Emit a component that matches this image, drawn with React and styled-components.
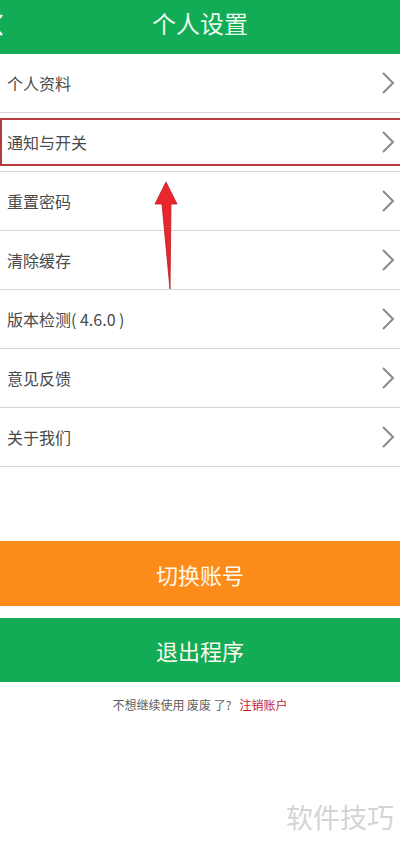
import styled, { createGlobalStyle } from "styled-components";

const GlobalStyle = createGlobalStyle`
  html, body {
    margin: 0;
    padding: 0;
    background: #ffffff;
  }
  body {
    font-family: "Noto Sans CJK SC", "Noto Sans", sans-serif;
  }
`;

const Page = styled.div`
  position: relative;
  width: 400px;
  height: 847px;
  overflow: hidden;
  background: #ffffff;
`;

const Header = styled.div`
  position: relative;
  height: 54px;
  background: #12ab56;
  display: flex;
  align-items: center;
  justify-content: center;
`;

const BackIcon = styled.svg`
  position: absolute;
  left: -10px;
  top: 13px;
`;

const Title = styled.h1`
  margin: 0;
  color: #eafbef;
  font-size: 24px;
  font-weight: 400;
  line-height: 1;
  padding-bottom: 8px;
`;

const List = styled.div`
  display: flex;
  flex-direction: column;
`;

const Row = styled.div`
  position: relative;
  height: 58px;
  display: flex;
  align-items: center;
  justify-content: space-between;
  padding: 0 4px 0 7px;
  border-bottom: 1px solid #d6d6d8;
`;

const RowLabel = styled.span`
  font-size: 16px;
  color: #4a4a4a;
`;

const Highlight = styled.div`
  position: absolute;
  left: 0;
  right: -2px;
  top: 5px;
  bottom: 5px;
  border: 2px solid #b53a40;
`;

const Arrow = styled.svg`
  position: absolute;
  left: 150px;
  top: 179px;
`;

const Buttons = styled.div`
  margin-top: 74px;
  display: flex;
  flex-direction: column;
  gap: 12px;
`;

const BigButton = styled.div`
  height: ${(p) => p.$h}px;
  background: ${(p) => p.$bg};
  color: #fff8ec;
  font-size: 22px;
  display: flex;
  align-items: center;
  justify-content: center;
`;

const Footer = styled.div`
  margin-top: 14px;
  text-align: center;
  font-size: 12px;
  color: #5e5e5e;
  white-space: pre;
`;

const Danger = styled.span`
  color: #c21b30;
`;

const Watermark = styled.div`
  position: absolute;
  right: 6px;
  top: 797px;
  font-size: 27px;
  color: #d4d4d4;
`;

const Chevron = () => (
  <svg width="16" height="24" viewBox="0 0 16 24">
    <polyline
      points="3,2 13,12 3,22"
      fill="none"
      stroke="#8a8a8a"
      strokeWidth="2"
    />
  </svg>
);

const items = [
  "个人资料",
  "通知与开关",
  "重置密码",
  "清除缓存",
  "版本检测( 4.6.0 )",
  "意见反馈",
  "关于我们",
];

export default function App() {
  return (
    <Page>
      <GlobalStyle />
      <Header>
        <BackIcon width="14" height="24" viewBox="0 0 14 24">
          <polyline
            points="12,2 3,12 12,22"
            fill="none"
            stroke="#ffffff"
            strokeWidth="2.5"
          />
        </BackIcon>
        <Title>个人设置</Title>
      </Header>
      <List>
        {items.map((label, i) => (
          <Row key={label}>
            <RowLabel>{label}</RowLabel>
            <Chevron />
            {i === 1 && <Highlight />}
          </Row>
        ))}
      </List>
      <Buttons>
        <BigButton $bg="#fb8c1a" $h={65}>切换账号</BigButton>
        <BigButton $bg="#12ab56" $h={64}>退出程序</BigButton>
      </Buttons>
      <Footer>
        {"不想继续使用 废废 了?   "}
        <Danger>注销账户</Danger>
      </Footer>
      <Arrow width="32" height="114" viewBox="0 0 32 114">
        <polygon
          points="16,3 27,25 21,25 20,110 12,25 5,25"
          fill="#e8262c"
          stroke="#b81c22"
          strokeWidth="0.8"
        />
      </Arrow>
      <Watermark>软件技巧</Watermark>
    </Page>
  );
}
